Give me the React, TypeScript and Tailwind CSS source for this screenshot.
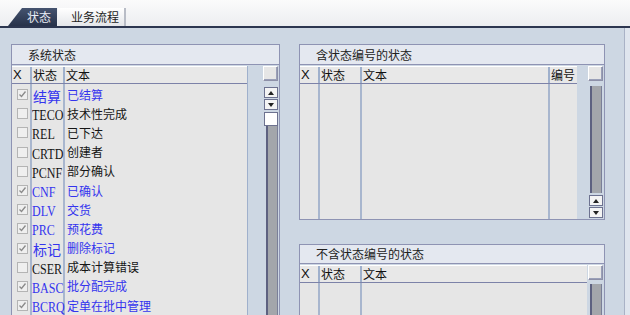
import React from 'react';

type Row = { code: string; text: string; on: boolean; cjk?: boolean };

const rows: Row[] = [
  { code: '结算', text: '已结算', on: true, cjk: true },
  { code: 'TECO', text: '技术性完成', on: false },
  { code: 'REL', text: '已下达', on: false },
  { code: 'CRTD', text: '创建者', on: false },
  { code: 'PCNF', text: '部分确认', on: false },
  { code: 'CNF', text: '已确认', on: true },
  { code: 'DLV', text: '交货', on: true },
  { code: 'PRC', text: '预花费', on: true },
  { code: '标记', text: '删除标记', on: true, cjk: true },
  { code: 'CSER', text: '成本计算错误', on: false },
  { code: 'BASC', text: '批分配完成', on: true },
  { code: 'BCRQ', text: '定单在批中管理', on: true },
];

const cjk = "font-['Noto_Sans_CJK_SC',sans-serif]";
const serif = "font-['Liberation_Serif','Noto_Sans_CJK_SC',serif]";

const Check: React.FC<{ on: boolean }> = ({ on }) => (
  <div className="w-[11px] h-[11px] border border-[#b4b4b4] bg-[#efefef] flex items-center justify-center">
    {on && (
      <svg width="9" height="9" viewBox="0 0 9 9">
        <path d="M1.5 4.5 L3.5 6.5 L7.5 1.5" fill="none" stroke="#8a8a8a" strokeWidth="1.3" />
      </svg>
    )}
  </div>
);

const SelBox = () => (
  <div className="w-[15px] h-[15px] border border-[#8d90a8] bg-[#e6e6e6] border-t-white border-l-white shadow-[inset_-1px_-1px_0_#9aa0b8]" />
);

const Arrow: React.FC<{ up?: boolean }> = ({ up }) => (
  <div className="w-[14px] h-[11px] border border-[#6d7290] bg-[#f4f4f4] flex items-center justify-center">
    <svg width="6" height="4" viewBox="0 0 6 4">
      {up ? <path d="M0 4 L3 0 L6 4 Z" fill="#222" /> : <path d="M0 0 L3 4 L6 0 Z" fill="#222" />}
    </svg>
  </div>
);

const Track: React.FC<{ h: string }> = ({ h }) => (
  <div className={`w-[12px] ${h} bg-[#a3a6ab] border-l-2 border-[#5d6180] border-r border-r-[#7a7f98]`} />
);

const Title: React.FC<{ text: string }> = ({ text }) => (
  <div className={`h-[20px] bg-[#e4e8f0] border-b border-[#8e93b3] pl-[16px] flex items-center text-[12px] text-[#222] ${cjk}`}>
    {text}
  </div>
);

const HeadCell: React.FC<{ w: string; children?: React.ReactNode; last?: boolean }> = ({ w, children, last }) => (
  <div className={`${w} h-full flex items-center pl-[1px] ${last ? '' : 'border-r-2 border-[#9fb0cc]'}`}>{children}</div>
);

export default function App() {
  return (
    <div className={`w-[630px] h-[315px] overflow-hidden flex flex-col bg-[#cdd7e3] ${cjk}`}>
      {/* tabs */}
      <div className="h-[28px] bg-gradient-to-b from-[#fbfbfb] to-[#eceef1] border-b-2 border-[#2c3650] flex items-end pl-[8px] shrink-0">
        <div className="w-[49px] h-[18px] bg-gradient-to-b from-[#45536f] to-[#27324a] [clip-path:polygon(14px_0,100%_0,100%_100%,0_100%)] pl-[19px] flex items-center text-[12px] text-[#e8ecf4]">
          状态
        </div>
        <div className="w-[68px] h-[18px] ml-[1px] bg-gradient-to-b from-[#ffffff] to-[#e4e6ea] border-r-2 border-[#b8bcc6] pl-[13px] flex items-center text-[12px] text-[#222]">
          业务流程
        </div>
      </div>

      {/* main */}
      <div className="flex-1 flex">
        <div className="w-[625px] border-r border-[#a9b2c6] flex pl-[11px] pt-[16px] gap-[19px]">
          {/* left panel */}
          <div className="w-[269px] h-[300px] border border-[#8e93b3] flex flex-col bg-[#cdd7e3]">
            <Title text="系统状态" />
            <div className="flex flex-1 pt-[1px]">
              <div className="w-[236px] flex flex-col border-r border-[#9fb0cc]">
                <div className="h-[18px] bg-[#e8e8e8] border-t border-white border-b border-b-[#7c82a8] flex text-[12px] text-[#111]">
                  <HeadCell w="w-[20px]">
                    <span className="font-['Liberation_Sans',sans-serif] text-[13px]">X</span>
                  </HeadCell>
                  <HeadCell w="w-[33px]">状态</HeadCell>
                  <HeadCell w="flex-1" last>
                    文本
                  </HeadCell>
                </div>
                <div className="flex-1 bg-[#e6e6e6] flex flex-col pt-[1px] relative">
                  <div className="absolute top-0 bottom-0 left-[18px] w-[2px] bg-[#a8b6ce]" />
                  <div className="absolute top-0 bottom-0 left-[51px] w-[2px] bg-[#a8b6ce]" />
                  {rows.map((r) => (
                    <div key={r.code} className={`relative h-[19.2px] flex items-center ${r.on ? 'text-[#3434ee]' : 'text-[#151515]'}`}>
                      <div className="w-[20px] pl-[5px] flex items-center">
                        <Check on={r.on} />
                      </div>
                      <div className="w-[34px] whitespace-nowrap">
                        {r.cjk ? (
                          <span className="text-[14px] pl-[1px]">{r.code}</span>
                        ) : (
                          <span className={`${serif} inline-block text-[14px] origin-left scale-x-[0.86]`}>{r.code}</span>
                        )}
                      </div>
                      <div className="flex-1 text-[12px] pl-[1px]">{r.text}</div>
                    </div>
                  ))}
                </div>
              </div>
              <div className="flex-1 flex flex-col items-end pr-[1px]">
                <SelBox />
                <div className="mt-[6px] flex flex-col gap-[1px]">
                  <Arrow up />
                  <Arrow />
                </div>
                <div className="mt-[2px] w-[14px] h-[14px] bg-white border border-[#6d7290]" />
                <Track h="flex-1" />
              </div>
            </div>
          </div>

          {/* right column */}
          <div className="w-[306px] flex flex-col">
            <div className="h-[176px] border border-[#8e93b3] flex flex-col">
              <Title text="含状态编号的状态" />
              <div className="flex flex-1 pt-[1px]">
                <div className="w-[277px] flex flex-col">
                  <div className="h-[18px] bg-[#e8e8e8] border-t border-white border-b border-b-[#7c82a8] flex text-[12px] text-[#111]">
                    <HeadCell w="w-[20px]">
                      <span className="font-['Liberation_Sans',sans-serif] text-[13px]">X</span>
                    </HeadCell>
                    <HeadCell w="w-[42px]">状态</HeadCell>
                    <HeadCell w="w-[188px]">文本</HeadCell>
                    <HeadCell w="flex-1" last>
                      编号
                    </HeadCell>
                  </div>
                  <div className="flex-1 bg-[#e6e6e6] flex">
                    <div className="w-[20px] border-r-2 border-[#a8b6ce]" />
                    <div className="w-[42px] border-r-2 border-[#a8b6ce]" />
                    <div className="w-[188px] border-r-2 border-[#a8b6ce]" />
                    <div className="flex-1" />
                  </div>
                </div>
                <div className="flex-1 flex flex-col items-end pr-[1px]">
                  <SelBox />
                  <div className="mt-[5px] mr-[1px]">
                    <Track h="h-[107px]" />
                  </div>
                  <div className="mt-[2px] flex flex-col gap-[1px]">
                    <Arrow up />
                    <Arrow />
                  </div>
                </div>
              </div>
            </div>

            <div className="mt-[24px] h-[80px] border border-[#8e93b3] flex flex-col">
              <Title text="不含状态编号的状态" />
              <div className="flex flex-1 pt-[1px]">
                <div className="w-[287px] flex flex-col">
                  <div className="h-[18px] bg-[#e8e8e8] border-t border-white border-b border-b-[#7c82a8] flex text-[12px] text-[#111]">
                    <HeadCell w="w-[20px]">
                      <span className="font-['Liberation_Sans',sans-serif] text-[13px]">X</span>
                    </HeadCell>
                    <HeadCell w="w-[42px]">状态</HeadCell>
                    <HeadCell w="flex-1" last>
                      文本
                    </HeadCell>
                  </div>
                  <div className="flex-1 bg-[#e6e6e6] flex">
                    <div className="w-[20px] border-r-2 border-[#a8b6ce]" />
                    <div className="w-[42px] border-r-2 border-[#a8b6ce]" />
                    <div className="flex-1" />
                  </div>
                </div>
                <div className="flex-1 flex flex-col items-end pr-[1px]">
                  <SelBox />
                  <div className="mt-[4px] mr-[1px]">
                    <Track h="h-[40px]" />
                  </div>
                </div>
              </div>
            </div>
          </div>
        </div>
        <div className="flex-1 bg-[#dfe5ee]" />
      </div>
    </div>
  );
}
